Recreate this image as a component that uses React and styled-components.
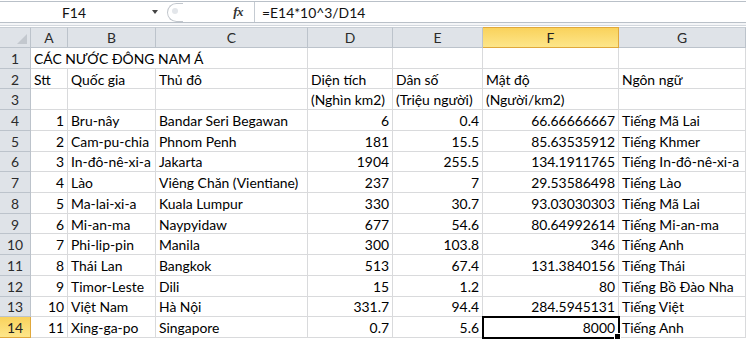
import React from 'react';
import styled, { createGlobalStyle, css } from 'styled-components';

const GlobalStyle = createGlobalStyle`
    html, body {
        margin: 0;
        padding: 0;
        background: #ffffff;
    }
    body {
        font-family: Lato, "Liberation Sans", sans-serif;
        font-size: 13.9px;
        color: #000;
        overflow: hidden;
    }
`;

const COLS = ['A', 'B', 'C', 'D', 'E', 'F', 'G'];
const RIGHT = [true, false, false, true, true, true, false];

const rows = [
    [['CÁC NƯỚC ĐÔNG NAM Á', 3]],
    ['Stt', 'Quốc gia', 'Thủ đô', 'Diện tích', 'Dân số', 'Mật độ', 'Ngôn ngữ'],
    ['', '', '', '(Nghìn km2)', '(Triệu người)', '(Người/km2)', ''],
    ['1', 'Bru-nây', 'Bandar Seri Begawan', '6', '0.4', '66.66666667', 'Tiếng Mã Lai'],
    ['2', 'Cam-pu-chia', 'Phnom Penh', '181', '15.5', '85.63535912', 'Tiếng Khmer'],
    ['3', 'In-đô-nê-xi-a', 'Jakarta', '1904', '255.5', '134.1911765', 'Tiếng In-đô-nê-xi-a'],
    ['4', 'Lào', 'Viêng Chăn (Vientiane)', '237', '7', '29.53586498', 'Tiếng Lào'],
    ['5', 'Ma-lai-xi-a', 'Kuala Lumpur', '330', '30.7', '93.03030303', 'Tiếng Mã Lai'],
    ['6', 'Mi-an-ma', 'Naypyidaw', '677', '54.6', '80.64992614', 'Tiếng Mi-an-ma'],
    ['7', 'Phi-lip-pin', 'Manila', '300', '103.8', '346', 'Tiếng Anh'],
    ['8', 'Thái Lan', 'Bangkok', '513', '67.4', '131.3840156', 'Tiếng Thái'],
    ['9', 'Timor-Leste', 'Dili', '15', '1.2', '80', 'Tiếng Bồ Đào Nha'],
    ['10', 'Việt Nam', 'Hà Nội', '331.7', '94.4', '284.5945131', 'Tiếng Việt'],
    ['11', 'Xing-ga-po', 'Singapore', '0.7', '5.6', '8000', 'Tiếng Anh'],
];

const Window = styled.div`
    width: 746px;
    height: 339px;
    overflow: hidden;
    background: #fff;
`;

const FormulaBar = styled.div`
    display: flex;
    align-items: stretch;
    height: 20px;
    margin-top: 1px;
    border-top: 1px solid #b9c0c8;
    border-bottom: 1px solid #b9c0c8;
    background: #fff;
`;

const NameBox = styled.div`
    width: 164px;
    display: flex;
    align-items: center;
    box-sizing: border-box;
    padding-left: 62px;
    color: #111;
`;

const DropArrow = styled.span`
    margin-left: auto;
    margin-right: 6px;
    width: 0;
    height: 0;
    border-left: 3.5px solid transparent;
    border-right: 3.5px solid transparent;
    border-top: 4px solid #444;
`;

const ButtonArea = styled.div`
    width: 91px;
    display: flex;
    align-items: center;
    justify-content: space-between;
    padding-right: 11px;
    box-sizing: border-box;
    border-right: 1px solid #c5cbd2;
`;

const Knob = styled.span`
    width: 16px;
    height: 19px;
    box-sizing: border-box;
    border: 1px solid #c2c7cd;
    border-right: none;
    border-radius: 10px 0 0 10px;
    position: relative;
    margin-left: 3px;

    &::after {
        content: '';
        position: absolute;
        left: 4px;
        top: 4px;
        width: 6px;
        height: 6px;
        border-radius: 50%;
        background: #e3e6ea;
    }
`;

const Fx = styled.span`
    font-family: "Liberation Serif", serif;
    font-style: italic;
    font-weight: bold;
    font-size: 13px;
    color: #333;
    letter-spacing: -0.5px;
`;

const Formula = styled.div`
    flex: 1;
    display: flex;
    align-items: center;
    padding-left: 7px;
    color: #111;
`;

const Gap = styled.div`
    height: 2px;
    border-bottom: 1px solid #d3d8de;
    background: #f4f5f7;
`;

const Sheet = styled.div`
    display: grid;
    grid-template-columns: 31px 37px 88px 152px 85px 90px 136px 127px;
    grid-template-rows: 21px repeat(14, 20.72px);
    margin-top: 1px;
`;

const headerActive = css`
    background: linear-gradient(#f9d25c, #fde68a);
    border-color: #e0a83c;
    color: #222;
`;

const Header = styled.div`
    background: #dfe3e8;
    border-right: 1px solid #bcc3cb;
    border-bottom: 1px solid #bcc3cb;
    border-top: 1px solid #c7cdd4;
    box-sizing: border-box;
    display: flex;
    align-items: center;
    justify-content: center;
    color: #2b2b2b;
    ${(p) => p.$active && headerActive}
`;

const Corner = styled(Header)`
    position: relative;

    &::after {
        content: '';
        position: absolute;
        right: 3px;
        bottom: 3px;
        width: 0;
        height: 0;
        border-left: 10px solid transparent;
        border-bottom: 10px solid #c3c8ce;
    }
`;

const RowHead = styled(Header)`
    border-top: none;
    padding-top: 1px;
`;

const Cell = styled.div`
    border-right: 1px solid #d9dadc;
    border-bottom: 1px solid #d9dadc;
    box-sizing: border-box;
    display: flex;
    align-items: center;
    justify-content: ${(p) => (p.$right ? 'flex-end' : 'flex-start')};
    padding: 1px 3px 0 3px;
    white-space: nowrap;
    overflow: visible;
    position: relative;
    grid-column: span ${(p) => p.$span || 1};

    ${(p) =>
        p.$selected &&
        css`
            outline: 2px solid #000;
            outline-offset: -1px;
            z-index: 2;

            &::after {
                content: '';
                position: absolute;
                right: -3px;
                bottom: -3px;
                width: 5px;
                height: 5px;
                background: #000;
                border: 1px solid #fff;
            }
        `}
`;

const SELECTED_ROW = 14;
const SELECTED_COL = 5;

const App = () => {
    return (
        <Window>
            <GlobalStyle />
            <FormulaBar>
                <NameBox>
                    F14
                    <DropArrow />
                </NameBox>
                <ButtonArea>
                    <Knob />
                    <Fx>fx</Fx>
                </ButtonArea>
                <Formula>=E14*10^3/D14</Formula>
            </FormulaBar>
            <Gap />
            <Sheet>
                <Corner />
                {COLS.map((c, i) => (
                    <Header key={c} $active={i === SELECTED_COL}>{c}</Header>
                ))}

                {rows.map((r, ri) => {
                    const n = ri + 1;
                    let cells;
                    if (n === 1) {
                        cells = [
                            <Cell key="a" $span={3}>{r[0][0]}</Cell>,
                            ...COLS.slice(3).map((c) => <Cell key={c} />),
                        ];
                    } else {
                        cells = r.map((v, ci) => (
                            <Cell
                                key={ci}
                                $right={RIGHT[ci] && n > 3}
                                $selected={n === SELECTED_ROW && ci === SELECTED_COL}
                            >
                                {v}
                            </Cell>
                        ));
                    }
                    return (
                        <React.Fragment key={n}>
                            <RowHead $active={n === SELECTED_ROW}>{n}</RowHead>
                            {cells}
                        </React.Fragment>
                    );
                })}
            </Sheet>
        </Window>
    );
};

export default App;
